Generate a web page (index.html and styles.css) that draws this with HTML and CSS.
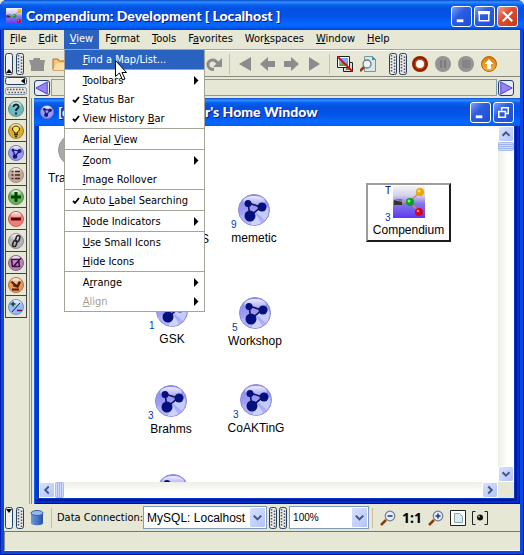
FILE: index.html
```html
<!DOCTYPE html>
<html lang="en">
<head>
<meta charset="utf-8">
<title>Compendium: Development [ Localhost ]</title>
<link rel="stylesheet" href="styles.css">
</head>
<body>
<svg class="defs" aria-hidden="true">
  <defs>
    <linearGradient id="brand-bg" x1="0" y1="0" x2="0" y2="1"><stop offset="0" stop-color="#f4f4f0"/><stop offset=".3" stop-color="#d4d0f0"/><stop offset=".55" stop-color="#8478e8"/><stop offset="1" stop-color="#6038f0"/></linearGradient>
    <linearGradient id="violet" x1="0" y1="0" x2="0" y2="1"><stop offset="0" stop-color="#8a88f0"/><stop offset=".5" stop-color="#9a9af4"/><stop offset="1" stop-color="#b8bcfa"/></linearGradient>
    <linearGradient id="shine" x1="0" y1="0" x2="0" y2="1"><stop offset="0" stop-color="#fff" stop-opacity=".85"/><stop offset="1" stop-color="#fff" stop-opacity=".1"/></linearGradient>
    <linearGradient id="orange" x1="0" y1="0" x2="0" y2="1"><stop offset="0" stop-color="#d87800"/><stop offset="1" stop-color="#ffb040"/></linearGradient>
    <linearGradient id="can" x1="0" y1="0" x2="1" y2="0"><stop offset="0" stop-color="#7098d8"/><stop offset=".5" stop-color="#4878c8"/><stop offset="1" stop-color="#2850a0"/></linearGradient>
    <symbol id="map" viewBox="0 0 32 32">
      <circle cx="16" cy="16" r="15.5" fill="url(#violet)" stroke="#8c8cdc"/>
      <path d="M16 17 30 13A15 15 0 0 1 27 26Z" fill="#c4ccfc"/><path d="M16 17 23 29A15 15 0 0 1 13 31Z" fill="#ccd4fc"/><path d="M13 18 2 22A15 15 0 0 0 5 26Z" fill="#b0b0fa"/>
      <ellipse cx="16" cy="7" rx="11" ry="5" fill="url(#shine)"/>
      <path d="M10 9 23 13 12 22Z" fill="none" stroke="#101050" stroke-width="1.6"/>
      <circle cx="10" cy="9.500" r="3.500" fill="#04107c"/><circle cx="24" cy="13" r="4.500" fill="#04107c"/><circle cx="12" cy="22" r="5.500" fill="#04107c"/>
    </symbol>
    <symbol id="mapsmall" viewBox="0 0 16 16">
      <circle cx="8" cy="8" r="7.500" fill="#9a9af8" stroke="#7070c8"/><ellipse cx="8" cy="4" rx="5" ry="3" fill="url(#shine)"/>
      <path d="M5 5 11.500 6 7 11.500Z" fill="none" stroke="#181870" stroke-width="1.200"/>
      <circle cx="5" cy="5" r="1.500" fill="#181870"/><circle cx="11.500" cy="6" r="2" fill="#181870"/><circle cx="7" cy="11.500" r="2.300" fill="#181870"/>
    </symbol>
    <symbol id="brand" viewBox="0 0 32 32">
      <path fill="url(#brand-bg)" d="M0 0h32v32H0z"/>
      <path d="M8 16h8L27 6M16 16l11 10" stroke="#c89060" stroke-width="1.500" fill="none"/>
      <path d="M1 14 9 16V19H1Z" fill="#333"/><path d="m2 13 7 3v-3z" fill="#777"/>
      <circle cx="17" cy="16" r="4" fill="#08a020"/><circle cx="16" cy="15" r="1.500" fill="#80f080"/>
      <circle cx="27" cy="6" r="4" fill="#e8a800"/><circle cx="26" cy="5" r="1.500" fill="#ffe870"/>
      <circle cx="26" cy="26" r="4" fill="#d80020"/><circle cx="25" cy="25" r="1.300" fill="#ff8080"/>
    </symbol>
    <symbol id="grip" viewBox="0 0 8 22">
      <rect x=".5" y=".5" width="7" height="21" rx="2" fill="#e8e8e8" stroke="#244068"/>
      <path d="M2.500 2v18M5.500 3.500v17" stroke="#555" stroke-width="1.500" stroke-dasharray="1.500 1.500"/>
    </symbol>
    <symbol id="fold" viewBox="0 0 8 22"><rect x=".5" y=".5" width="7" height="21" rx="2" fill="#f2f2ec" stroke="#244068"/><path d="M1 20 4 16 7 20Z"/></symbol>
    <symbol id="arrow" viewBox="0 0 16 16"><path d="M0 8 8 1v4h7v6H8v4Z" fill="#8c8c8c"/></symbol>
    <symbol id="lens" viewBox="0 0 16 16">
      <path d="m1 15 5-5" stroke="#8c3c10" stroke-width="2.500"/><circle cx="10" cy="6" r="4.800" fill="#e0ecff" stroke="#7c7c80" stroke-width="1.200"/>
    </symbol>
    <symbol id="chevron" viewBox="0 0 16 16"><path d="m4 6 4 4 4-4" fill="none" stroke="#405880" stroke-width="2.200"/></symbol>
    <symbol id="min" viewBox="0 0 20 20"><path d="M5 13h7v3H5z" fill="#fff"/></symbol>
    <symbol id="tri" viewBox="0 0 16 16"><path d="M14 1v14L1 8Z" fill="#9484f4" stroke="#4838b0"/></symbol>
    <symbol id="check" viewBox="0 0 8 8"><path d="m1 4 2 2 4-5" fill="none" stroke="#000" stroke-width="1.800"/></symbol>
    <symbol id="sub" viewBox="0 0 5 9"><path d="M0 0 4.500 4.500 0 9Z" fill="currentColor"/></symbol>
  </defs>
</svg>

<div class="app">
  <header class="titlebar">
    <svg class="i16"><use href="#brand"/></svg>
    <h1>Compendium: Development [ Localhost ]</h1>
    <button class="cap" aria-label="Minimize"><svg><use href="#min"/></svg></button>
    <button class="cap" aria-label="Maximize"><svg viewBox="0 0 20 20"><path d="M4.500 5.500h10v9h-10zM4 5h11v2H4z" fill="none" stroke="#fff" stroke-width="1.500"/></svg></button>
    <button class="cap close" aria-label="Close"><svg viewBox="0 0 20 20"><path d="m5 5 10 10M15 5 5 15" stroke="#fff" stroke-width="2.200"/></svg></button>
  </header>

  <div class="client">
    <nav class="menubar">
      <button><u>F</u>ile</button>
      <button><u>E</u>dit</button>
      <div class="holder">
        <button class="open"><u>V</u>iew</button>
        <div class="menu">
          <button class="hot"><span><u>F</u>ind a Map/List...</span></button>
          <hr>
          <button><span><u>T</u>oolbars</span><svg class="sub"><use href="#sub"/></svg></button>
          <button><svg class="check"><use href="#check"/></svg><span><u>S</u>tatus Bar</span></button>
          <button><svg class="check"><use href="#check"/></svg><span>View History <u>B</u>ar</span></button>
          <hr>
          <button><span>Aerial <u>V</u>iew</span></button>
          <hr>
          <button><span><u>Z</u>oom</span><svg class="sub"><use href="#sub"/></svg></button>
          <button><span><u>I</u>mage Rollover</span></button>
          <hr>
          <button><svg class="check"><use href="#check"/></svg><span>Auto <u>L</u>abel Searching</span></button>
          <hr>
          <button><span><u>N</u>ode Indicators</span><svg class="sub"><use href="#sub"/></svg></button>
          <hr>
          <button><span><u>U</u>se Small Icons</span></button>
          <button><span><u>H</u>ide Icons</span></button>
          <hr>
          <button><span>A<u>r</u>range</span><svg class="sub"><use href="#sub"/></svg></button>
          <button class="off"><span><u>A</u>lign</span><svg class="sub"><use href="#sub"/></svg></button>
          <svg class="pointer" viewBox="0 0 12 21"><path d="M.5.500v16l4-3.500 3 7 2.500-1-3-6.500h4.500Z" fill="#fff" stroke="#000"/></svg>
        </div>
      </div>
      <button>F<u>o</u>rmat</button>
      <button><u>T</u>ools</button>
      <button>F<u>a</u>vorites</button>
      <button>Wor<u>k</u>spaces</button>
      <button><u>W</u>indow</button>
      <button><u>H</u>elp</button>
    </nav>

    <div class="toolbar">
      <div class="grips"><svg class="grip"><use href="#fold"/></svg><svg class="grip"><use href="#grip"/></svg></div>
      <div class="tools files">
        <button aria-label="Close project"><svg viewBox="0 0 16 16"><path d="M0 4h4l1-2h6v2h5l-1 6v5H2v-5Z" fill="#909090"/></svg></button>
        <button aria-label="Open"><svg viewBox="0 0 16 16"><path d="M1 14V3h5l1 2h9v9Z" fill="#f8c478" stroke="#b86818"/><path d="m1 14 4-7h11v7Z" fill="#ffe0a8"/></svg></button>
      </div>
      <div class="tools">
        <button aria-label="Redo"><svg viewBox="0 0 16 16"><path d="M8 13.500C0 13.500 0 4 7 4c3 0 4 2 5 4" fill="none" stroke="#8c8c8c" stroke-width="3"/><path d="M16 2v9H7Z" fill="#8c8c8c"/></svg></button>
        <i class="rule"></i>
        <button aria-label="First"><svg viewBox="0 0 16 16"><path d="M14 1v14L2 8Z" fill="#8c8c8c"/></svg></button>
        <button aria-label="Back"><svg><use href="#arrow"/></svg></button>
        <button aria-label="Forward"><svg class="flip"><use href="#arrow"/></svg></button>
        <button aria-label="Last"><svg viewBox="0 0 16 16"><path d="M3 1v14l11-7Z" fill="#8c8c8c"/></svg></button>
        <i class="rule"></i>
        <button aria-label="Image rollover"><svg viewBox="0 0 16 16"><path d="M6.500 6.500h9v9h-9z" fill="#ddd" stroke="#222"/><path d="M9 12h5v2H9z" fill="#40a030"/><path d="M.5.500h12v11H.5z" fill="#fff" stroke="#222"/><path d="M2 2h9v8H2z" fill="#70b0f8"/><path d="m2 10 4-5 2 3 3-2v4z" fill="#50b030"/><path d="m0 0 16 16" stroke="#e00010" stroke-width="1.800"/></svg></button>
        <button aria-label="Search"><svg viewBox="0 0 16 16"><path d="M4.500.500h8l3 3v12h-11z" fill="#d4e8ec" stroke="#7098a0"/><path d="M12 0v4h4" fill="#4890a8"/><path d="m0 15 5-5" stroke="#8c3c10" stroke-width="2.500"/><circle cx="7" cy="8" r="4" fill="#eef4ff" stroke="#777" stroke-width="1.300"/></svg></button>
      </div>
      <div class="grips second"><svg class="grip"><use href="#grip"/></svg><svg class="grip"><use href="#grip"/></svg></div>
      <div class="tools">
        <button aria-label="Record"><svg viewBox="0 0 16 16"><circle cx="8" cy="8" r="8" fill="#902000"/><circle cx="8" cy="8" r="5.500" fill="#c04818"/><circle cx="8" cy="8" r="4" fill="#fff"/></svg></button>
        <button aria-label="Pause"><svg viewBox="0 0 16 16"><circle cx="8" cy="8" r="8" fill="#949494"/><path d="M6 4v8M10 4v8" stroke="#7c7c7c" stroke-width="2"/></svg></button>
        <button aria-label="Stop"><svg viewBox="0 0 16 16"><circle cx="8" cy="8" r="8" fill="#949494"/><path d="M4 4h8v8H4z" fill="#858585"/></svg></button>
        <button aria-label="Up"><svg viewBox="0 0 16 16"><circle cx="8" cy="8" r="7.500" fill="url(#orange)" stroke="#b86800"/><path d="m8 3 4.500 5H10v5H6V8H3.500Z" fill="#fff"/></svg></button>
      </div>
    </div>

    <div class="main">
      <aside class="palette">
        <svg class="flat" viewBox="0 0 22 8"><rect x=".5" y=".5" width="21" height="7" rx="2" fill="#f2f2ec" stroke="#244068"/><path d="M20 1v6l-4-3Z"/></svg>
        <svg class="flat" viewBox="0 0 22 8"><rect x=".5" y=".5" width="21" height="7" rx="2" fill="#e8e8e8" stroke="#8898a8"/><path d="M2 2.500h18M3.500 5.500h17" stroke="#555" stroke-width="1.500" stroke-dasharray="1.500 1.500"/></svg>
        <div class="stack">
          <button aria-label="Question"><svg viewBox="0 0 16 16"><circle cx="8" cy="8" r="7.500" fill="#70b8bc" stroke="#5c9094"/><ellipse cx="8" cy="4" rx="5" ry="3" fill="url(#shine)"/><path d="M5.500 6c0-3.500 5.500-3 5 0C10 8 8 7.500 8 10M8 11.500v2" fill="none" stroke="#062c38" stroke-width="2"/></svg></button>
          <button aria-label="Answer"><svg viewBox="0 0 16 16"><circle cx="8" cy="8" r="7.500" fill="#d8b030" stroke="#a08020"/><ellipse cx="8" cy="4" rx="5" ry="3" fill="url(#shine)"/><path d="M6.500 10c0-2-2-2-2-4 0-4 7-4 7 0 0 2-2 2-2 4z" fill="#ffe060" stroke="#302000"/><path d="M6 11.500h4M7 13.500h2" stroke="#302000" stroke-width="1.500"/></svg></button>
          <button aria-label="Map"><svg><use href="#mapsmall"/></svg></button>
          <button aria-label="List"><svg viewBox="0 0 16 16"><circle cx="8" cy="8" r="7.500" fill="#c4a89c" stroke="#a08c80"/><ellipse cx="8" cy="4" rx="5" ry="3" fill="url(#shine)"/><path d="M3.500 4.500h2m1.500 0h5M3.500 8h2M7 8h5m-8.500 3.500h2m1.500 0h5" stroke="#402818" stroke-width="1.500"/></svg></button>
          <button aria-label="Pro"><svg viewBox="0 0 16 16"><circle cx="8" cy="8" r="7.500" fill="#68b458" stroke="#508c48"/><ellipse cx="8" cy="4" rx="5" ry="3" fill="url(#shine)"/><path d="M8 3v10M3 8h10" stroke="#004400" stroke-width="3"/></svg></button>
          <button aria-label="Con"><svg viewBox="0 0 16 16"><circle cx="8" cy="8" r="7.500" fill="#ec8078" stroke="#c06058"/><ellipse cx="8" cy="4" rx="5" ry="3" fill="url(#shine)"/><path d="M3 8h10" stroke="#600000" stroke-width="3"/></svg></button>
          <button aria-label="Reference"><svg viewBox="0 0 16 16"><circle cx="8" cy="8" r="7.500" fill="#b4b4b8" stroke="#909094"/><ellipse cx="8" cy="4" rx="5" ry="3" fill="url(#shine)"/><rect x="8" y="2.500" width="3.500" height="6" rx="1.700" transform="rotate(20 9.500 5.500)" fill="none" stroke="#222" stroke-width="1.500"/><rect x="5" y="7.500" width="3.500" height="6" rx="1.700" transform="rotate(20 6.500 10.500)" fill="none" stroke="#222" stroke-width="1.500"/></svg></button>
          <button aria-label="Note"><svg viewBox="0 0 16 16"><circle cx="8" cy="8" r="7.500" fill="#b088b0" stroke="#886088"/><ellipse cx="8" cy="4" rx="5" ry="3" fill="url(#shine)"/><path d="M3.500 4.500h7l1 7h-7zM6 11l7-8" fill="none" stroke="#480848" stroke-width="1.500"/></svg></button>
          <button aria-label="Decision"><svg viewBox="0 0 16 16"><circle cx="8" cy="8" r="7.500" fill="#e8985c" stroke="#b87040"/><ellipse cx="8" cy="4" rx="5" ry="3" fill="url(#shine)"/><path d="m3.500 4.500 4 4" stroke="#502000" stroke-width="2"/><path d="m5.500 8 4 1.500 2.500-5" fill="none" stroke="#502000" stroke-width="2.500"/><path d="M4 12.500h7" stroke="#502000" stroke-width="2"/></svg></button>
          <button aria-label="Argument"><svg viewBox="0 0 16 16"><circle cx="8" cy="8" r="7.500" fill="#98bcf8" stroke="#7090d0"/><ellipse cx="8" cy="4" rx="5" ry="3" fill="url(#shine)"/><path d="M5 2.500v5M2.500 5h5" stroke="#004c20" stroke-width="1.500"/><path d="m4 13 8-9" stroke="#101840"/><path d="M9 11.500h5" stroke="#800020" stroke-width="1.500"/></svg></button>
        </div>
      </aside>

      <div class="right">
        <div class="history">
          <button aria-label="Previous view"><svg><use href="#tri"/></svg></button>
          <input type="text" aria-label="View history">
          <button aria-label="Next view"><svg class="flip"><use href="#tri"/></svg></button>
        </div>
        <div class="desk">
        <section class="frame">
          <header class="titlebar inner">
            <svg class="i14"><use href="#mapsmall"/></svg>
            <h2><span class="owner">[c</span><span>r's Home Window</span></h2>
            <button class="cap" aria-label="Minimize view"><svg><use href="#min"/></svg></button>
            <button class="cap" aria-label="Restore view"><svg viewBox="0 0 20 20"><path d="M8 8V5h7v6h-3M5 9h7v6H5z" fill="none" stroke="#fff" stroke-width="1.600"/></svg></button>
          </header>
          <div class="view">
            <div class="canvas">
              <div class="node n-trash"><svg viewBox="0 0 32 32"><circle cx="16" cy="16" r="15.500" fill="#a8a8a8" stroke="#999"/></svg><span>Tra</span></div>
              <div class="node n-s"><span>S</span></div>
              <div class="node n-memetic"><svg><use href="#map"/></svg><b>9</b><span>memetic</span></div>
              <div class="node n-gsk"><svg><use href="#map"/></svg><b>1</b><span>GSK</span></div>
              <div class="node n-workshop"><svg><use href="#map"/></svg><b>5</b><span>Workshop</span></div>
              <div class="node n-brahms"><svg><use href="#map"/></svg><b>3</b><span>Brahms</span></div>
              <div class="node n-coakting"><svg><use href="#map"/></svg><b>3</b><span>CoAKTinG</span></div>
              <div class="node n-last"><svg><use href="#map"/></svg></div>
              <div class="node n-compendium"><svg><use href="#brand"/></svg><em>T</em><b>3</b><span>Compendium</span></div>
            </div>
            <div class="vbar">
              <button aria-label="Scroll up"><svg class="up"><use href="#chevron"/></svg></button>
              <i class="thumb"></i>
              <button class="end" aria-label="Scroll down"><svg><use href="#chevron"/></svg></button>
            </div>
            <div class="hbar">
              <button aria-label="Scroll left"><svg class="lt"><use href="#chevron"/></svg></button>
              <i class="thumb"></i>
              <button class="end" aria-label="Scroll right"><svg class="rt"><use href="#chevron"/></svg></button>
            </div>
            <i class="corner"></i>
          </div>
        </section>
        </div>
      </div>
    </div>

    <div class="bottom">
      <div class="grips"><svg class="grip turn"><use href="#fold"/></svg><svg class="grip"><use href="#grip"/></svg></div>
      <svg class="db" viewBox="0 0 14 16"><path d="M1 3v10c0 3 12 3 12 0V3Z" fill="url(#can)"/><ellipse cx="7" cy="3" rx="6" ry="2.500" fill="#98b8f0" stroke="#3860a8"/></svg>
      <i class="rule"></i>
      <label for="conn">Data Connection:</label>
      <div class="combo conn"><select id="conn"><option>MySQL: Localhost</option></select><svg><use href="#chevron"/></svg></div>
      <div class="grips tight"><svg class="grip"><use href="#grip"/></svg><svg class="grip"><use href="#grip"/></svg></div>
      <div class="combo zoom"><select aria-label="Zoom"><option>100%</option></select><svg><use href="#chevron"/></svg></div>
      <i class="rule"></i>
      <div class="zooms">
        <button aria-label="Zoom out"><svg viewBox="0 0 16 16"><use href="#lens"/><path d="M7.500 6h5" stroke="#203880" stroke-width="1.500"/></svg></button>
        <button class="one">1:1</button>
        <button aria-label="Zoom in"><svg viewBox="0 0 16 16"><use href="#lens"/><path d="M7.500 6h5M10 3.500v5" stroke="#203880" stroke-width="1.500"/></svg></button>
        <button aria-label="Fit to page"><svg viewBox="0 0 16 16"><path d="M.5.500h15v15H.5z" fill="#fff" stroke="#222"/><path d="M4.500 3.500h5l3 3v6h-8z" fill="#d8ecf0" stroke="#88a8b0"/></svg></button>
        <button aria-label="Focus node"><svg viewBox="0 0 16 16"><path d="M3.500 1.500h-3v13h3M12.500 1.500h3v13h-3" fill="none" stroke="#222"/><circle cx="8" cy="7.500" r="3" fill="#111"/><circle cx="7" cy="6.500" r="1" fill="#aaa"/></svg></button>
      </div>
    </div>
    <footer class="status"></footer>
  </div>
</div>
</body>
</html>
```
FILE: styles.css
```css
* { box-sizing: border-box; }

body {
  margin: 0;
  background: #e7e7d6;
  font: 11px/14px "DejaVu Sans Condensed", "Noto Sans", sans-serif;
  color: #000;
}

button {
  margin: 0;
  padding: 0;
  border: 0;
  background: none;
  font: inherit;
  color: inherit;
}

svg { display: block; }
.defs { position: absolute; width: 0; height: 0; }
.i16 { width: 16px; height: 16px; }
.i14 { width: 14px; height: 14px; }
.flip { transform: scaleX(-1); }

.app {
  display: flex;
  flex-direction: column;
  min-height: 100vh;
  padding: 0 4px 4px;
  border-radius: 7px 7px 0 0;
  background: #0a48e0;
  box-shadow: inset 1px 0 #0020b0, inset -1px -1px #001898;
}

.titlebar {
  display: flex;
  align-items: center;
  gap: 2px;
  height: 30px;
  margin: 0 -4px;
  padding: 2px 6px 0 6px;
  border-radius: 7px 7px 0 0;
  background: linear-gradient(#0848c8 0, #3090ff 2px, #0860f0 5px, #0450e0 9px, #0454e8 17px, #0468ff 24px, #0460f8 27px, #0040c8 30px);
  color: #fff;
}

.titlebar h1, .titlebar h2 {
  display: flex;
  flex: 1;
  margin: 0 0 0 2px;
  font: 900 14px/18px Lato, "Noto Sans", sans-serif;
  white-space: nowrap;
  text-shadow: 1px 1px #0a1e80;
}

.cap {
  width: 21px;
  height: 21px;
  border: 1px solid #fff;
  border-radius: 3px;
  background: linear-gradient(135deg, #7ca0f8, #2c5ce0 40%, #1c50d8);
}
.cap svg { width: 19px; height: 19px; }
.cap.close { background: linear-gradient(135deg, #f0a088, #e05030 40%, #c83810); }

.client {
  display: flex;
  flex: 1;
  flex-direction: column;
  background: #e7e7d6;
}

.menubar {
  display: flex;
  height: 20px;
  border-bottom: 1px solid #a5a597;
}
.menubar > button, .open { height: 19px; padding: 0 6px 1px; }
.holder { position: relative; }
.open { background: #2a62c0; color: #fff; }

.menu {
  position: absolute;
  top: 19px;
  left: 0;
  z-index: 5;
  display: flex;
  flex-direction: column;
  width: 141px;
  border: 1px solid #a5a597;
  background: #fff;
}
.menu > button {
  position: relative;
  height: 19px;
  padding-left: 18px;
  text-align: left;
  white-space: nowrap;
}
.menu hr {
  width: 100%;
  height: 2px;
  margin: 0;
  border: 0;
  border-top: 1px solid #a5a597;
}
.menu .hot { background: #2a62c0; color: #fff; }
.menu .off span { color: #a0a094; }
.menu .check { position: absolute; top: 6px; left: 7px; width: 8px; height: 8px; }
.menu .sub { position: absolute; top: 5px; right: 5px; width: 5px; height: 9px; }
.menu .pointer { position: absolute; top: 10px; left: 50px; width: 12px; height: 21px; }

.toolbar {
  display: flex;
  align-items: center;
  height: 27px;
  border-top: 1px solid #fff;
  border-bottom: 1px solid #88887c;
  padding-left: 1px;
}
.grips { display: flex; gap: 3px; }
.grip { width: 8px; height: 22px; }
.turn { transform: rotate(180deg); }
.tools { display: flex; align-items: center; gap: 7px; }
.tools svg { width: 16px; height: 16px; }
.files { width: 182px; padding-left: 5px; }
.rule { width: 1px; height: 20px; background: #d8b8a0; }
.second { gap: 2px; margin: 0 5px 0 13px; }

.main { display: flex; flex: 1; }
.palette {
  display: flex;
  flex-direction: column;
  gap: 2px;
  width: 25px;
  padding-left: 1px;
}
.flat { width: 22px; height: 8px; }
.stack {
  width: 22px;
  border: 1px solid #444;
  border-top: 0;
}
.stack button {
  display: grid;
  place-items: center;
  width: 20px;
  height: 22px;
  border-top: 1px solid #444;
}
.stack svg { width: 16px; height: 16px; }

.right {
  display: flex;
  flex: 1;
  flex-direction: column;
  border-left: 1px solid #a5a597;
}
.history {
  display: flex;
  align-items: center;
  gap: 1px;
  height: 21px;
  padding: 0 6px 0 4px;
}
.history button {
  width: 16px;
  height: 16px;
  border: 1px solid #244068;
  border-radius: 3px;
  background: #e8e8ff;
}
.history svg { width: 14px; height: 14px; }
.history input {
  flex: 1;
  min-width: 0;
  height: 17px;
  padding: 0 4px;
  border: 1px solid #7f9db9;
  background: transparent;
  font: inherit;
}

.desk {
  display: flex;
  flex: 1;
  margin-left: 1px;
  padding-left: 2px;
  border-left: 1px solid #88887c;
}

.frame {
  display: flex;
  flex: 1;
  flex-direction: column;
  padding: 0 6px 6px 5px;
  background: #0438c8;
  box-shadow: inset 1px 0 #0a60f0, inset -1px -1px #001070, inset -3px -3px #0030d0, inset -5px -5px #0018a0;
}
.inner {
  height: 28px;
  margin: 0 -6px 0 -5px;
  padding: 1px 6px 1px 6px;
  border-radius: 0;
}
.owner { width: 147px; }

.view {
  display: grid;
  flex: 1;
  grid-template: 1fr 16px / 1fr 16px;
  background: #fff;
}
.canvas { position: relative; overflow: hidden; }

.node {
  position: absolute;
  width: 84px;
  text-align: center;
  font: 12px/16px "Liberation Sans", Arial, sans-serif;
}
.node svg { width: 32px; height: 32px; margin: 0 auto 4px; }
.node span { display: block; white-space: nowrap; }
.node b, .node em {
  position: absolute;
  left: 19px;
  font: 10px/12px "Liberation Sans", Arial, sans-serif;
  color: #0038b8;
}
.node b { top: 25px; }
.node em { top: 0; color: #000078; }
.n-trash { left: -7px; top: 8px; }
.n-trash span { padding-left: 16px; text-align: left; }
.n-s { left: 124px; top: 105px; }
.n-memetic { left: 173px; top: 68px; }
.n-gsk { left: 91px; top: 169px; }
.n-workshop { left: 174px; top: 171px; }
.n-brahms { left: 90px; top: 259px; }
.n-coakting { left: 175px; top: 258px; }
.n-last { left: 92px; top: 348px; }
.n-compendium {
  left: 327px;
  top: 57px;
  width: 85px;
  height: 59px;
  padding-top: 1px;
  border: 2px solid #1c1c1c;
  border-top-color: #9c9c9c;
  border-left-color: #9c9c9c;
}
.n-compendium b { top: 27px; left: 17px; }
.n-compendium em { left: 17px; }

.vbar, .hbar { display: flex; background: linear-gradient(90deg, #eeeee8, #fffffa 60%); }
.vbar { flex-direction: column; }
.hbar { background: linear-gradient(#eeeee8, #fffffa 60%); }
.vbar button, .hbar button {
  width: 16px;
  height: 16px;
  border: 1px solid #fff;
  border-radius: 2px;
  background: linear-gradient(135deg, #d8e0ff, #b4c4f8);
}
.vbar svg, .hbar svg { width: 14px; height: 14px; }
.up { transform: rotate(180deg); }
.lt { transform: rotate(90deg); }
.rt { transform: rotate(-90deg); }
.end { margin-top: auto; }
.hbar .end { margin: 0 0 0 auto; }
.thumb { border: 1px solid #a8bcf0; border-radius: 2px; }
.vbar .thumb { height: 9px; background: repeating-linear-gradient(#d0dcff 0 1px, #a0b4f0 1px 2px); }
.hbar .thumb { width: 9px; background: repeating-linear-gradient(90deg, #d0dcff 0 1px, #a0b4f0 1px 2px); }
.corner { background: #e7e7d6; }

.bottom {
  display: flex;
  align-items: center;
  height: 28px;
  padding-left: 1px;
  border-bottom: 1px solid #77776c;
}
.db { width: 14px; height: 16px; margin: 0 7px 0 6px; }
.bottom label { margin-left: 5px; }
.combo { position: relative; height: 23px; }
.combo select {
  width: 100%;
  height: 100%;
  padding: 0 18px 0 3px;
  border: 1px solid #7f9db9;
  border-radius: 0;
  background: #fff;
  font: 12px/16px "Liberation Sans", Arial, sans-serif;
  color: #000;
  appearance: none;
}
.combo svg {
  position: absolute;
  top: 2px;
  right: 2px;
  width: 15px;
  height: 19px;
  border-radius: 1px;
  background: linear-gradient(135deg, #d8e0ff, #b4c4f8);
  pointer-events: none;
}
.conn { width: 124px; }
.zoom { width: 80px; margin-right: 3px; }
.zoom select { font-size: 10px; }
.tight { gap: 2px; margin: 0 2px; }
.zooms { display: flex; align-items: center; gap: 6px; margin-left: 7px; }
.zooms svg { width: 16px; height: 16px; }
.one { font: bold 14px/16px "Noto Sans", sans-serif; }
.status { height: 19px; border-left: 1px solid #88887c; border-bottom: 1px solid #fff; }
```
